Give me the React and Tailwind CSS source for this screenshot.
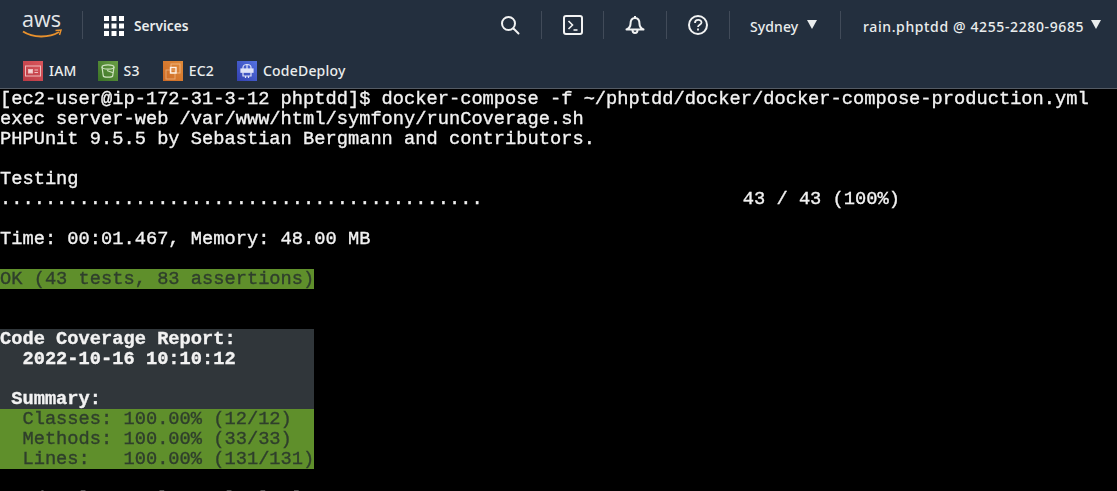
import React from 'react';

const BOOKMARKS = [
  { name: 'IAM', gap: 'mr-[21px]', from: 'from-[#b93a44]', to: 'to-[#d9565c]', icon: 'iam' },
  { name: 'S3', gap: 'mr-[23px]', from: 'from-[#3a7326]', to: 'to-[#6a9f45]', icon: 's3' },
  { name: 'EC2', gap: 'mr-[23px]', from: 'from-[#cc6a26]', to: 'to-[#e08a38]', icon: 'ec2' },
  { name: 'CodeDeploy', gap: '', from: 'from-[#3340b0]', to: 'to-[#5472e0]', icon: 'deploy' },
];

function BookmarkGlyph({ icon }) {
  if (icon === 'iam') {
    return (
      <svg viewBox="0 0 20 20" className="w-5 h-5" fill="none" stroke="#eebcbc" strokeWidth="1">
        <rect x="2.5" y="5" width="15" height="10" />
        <rect x="5.5" y="8.5" width="4" height="3.5" fill="#f3d6d6" />
        <path d="M11.5 9h3.5M11.5 11.5h3.5" />
      </svg>
    );
  }
  if (icon === 's3') {
    return (
      <svg viewBox="0 0 20 20" className="w-5 h-5" fill="none" stroke="#cfe3c0" strokeWidth="1.2">
        <ellipse cx="10" cy="6" rx="6" ry="2.2" />
        <path d="M4 6l1.300 9c.4 1.500 9 1.500 9.400 0L16 6" />
        <path d="M9 9.500l6 2.200" />
      </svg>
    );
  }
  if (icon === 'ec2') {
    return (
      <svg viewBox="0 0 20 20" className="w-5 h-5" fill="none">
        <rect x="8" y="3" width="9" height="9" stroke="#eeb27c" strokeWidth="1" />
        <rect x="3" y="9" width="9" height="9" stroke="#e9a56c" strokeWidth="1" />
        <rect x="7.500" y="6.500" width="5.500" height="5.500" stroke="#fdf1e6" strokeWidth="1.400" />
      </svg>
    );
  }
  return (
    <svg viewBox="0 0 20 20" className="w-5 h-5" fill="none" stroke="#dfe3f8" strokeWidth="1.200">
      <path d="M6 8V6.500C6 4.500 8 3.500 10 3.500s4 1 4 3V8" />
      <rect x="4" y="8" width="12" height="3.200" fill="#dfe3f8" />
      <path d="M6 11.200V15h8v-3.800M8.500 15v2M11.500 15v2M10 3.500V8" />
    </svg>
  );
}

function Caret() {
  return (
    <svg viewBox="0 0 10 9" className="w-[10px] h-[9px]" fill="#eaeded">
      <path d="M0 0h10L5 9z" />
    </svg>
  );
}

function TopBar() {
  return (
    <div className="h-[52px] flex items-center">
      <svg viewBox="0 0 40 28" className="w-10 h-7 ml-[22px] -mt-[1px]">
        <text x="0" y="15" fontFamily="'Open Sans', sans-serif" fontSize="21" fill="#e4e7e9" textLength="39" lengthAdjust="spacingAndGlyphs">aws</text>
        <path d="M1 19.500c10 6.500 26 6.500 36 .5" fill="none" stroke="#e8912d" strokeWidth="2" />
        <path d="M33.500 18.500l5.500-.5-1.500 5" fill="none" stroke="#e8912d" strokeWidth="1.500" />
      </svg>
      <div className="w-px h-[28px] bg-[#414b59] ml-[20px] -mt-[2px]" />
      <svg viewBox="0 0 20 20" className="w-5 h-5 ml-[21px]" fill="#fff">
        <rect x="0" y="0" width="5" height="5" /><rect x="7.500" y="0" width="5" height="5" /><rect x="15" y="0" width="5" height="5" />
        <rect x="0" y="7.500" width="5" height="5" /><rect x="7.500" y="7.500" width="5" height="5" /><rect x="15" y="7.500" width="5" height="5" />
        <rect x="0" y="15" width="5" height="5" /><rect x="7.500" y="15" width="5" height="5" /><rect x="15" y="15" width="5" height="5" />
      </svg>
      <span className="ml-[10px] text-[13.7px] font-semibold text-[#eaeded]">Services</span>

      <div className="flex-1" />

      {/* search */}
      <div className="w-[62px] h-[28px] -mt-[2px] flex items-center justify-center">
        <svg viewBox="0 0 20 20" className="w-5 h-5" fill="none" stroke="#f2f3f3" strokeWidth="2">
          <circle cx="8.500" cy="8.500" r="6.500" />
          <path d="M13.500 13.500l5 5" strokeLinecap="round" />
        </svg>
      </div>
      {/* cloudshell */}
      <div className="w-[62px] h-[28px] -mt-[2px] border-l border-[#414b59] flex items-center justify-center">
        <svg viewBox="0 0 20 20" className="w-5 h-5" fill="none" stroke="#f2f3f3" strokeWidth="2">
          <rect x="1" y="1" width="18" height="18" rx="2" />
          <path d="M5.500 6l4 4-4 4" strokeWidth="1.600" />
          <path d="M10.500 15h4" strokeWidth="1.600" />
        </svg>
      </div>
      {/* notifications */}
      <div className="w-[63px] h-[28px] -mt-[2px] border-l border-[#414b59] flex items-center justify-center">
        <svg viewBox="0 0 20 20" className="w-5 h-5" fill="none" stroke="#f2f3f3" strokeWidth="2">
          <path d="M10 1v2M5.500 9c0-4 2-6 4.500-6s4.500 2 4.500 6c0 2.500 2 4.500 4 5.500H1.500c2-1 4-3 4-5.500z" strokeLinejoin="round" />
          <path d="M7.500 15c0 4 5 4 5 0" />
        </svg>
      </div>
      {/* support */}
      <div className="w-[63px] h-[28px] -mt-[2px] border-l border-[#414b59] flex items-center justify-center">
        <svg viewBox="0 0 20 20" className="w-5 h-5" fill="none" stroke="#f2f3f3" strokeWidth="2">
          <circle cx="10" cy="10" r="9" />
          <path d="M7 8c0-4 6.500-4 6.500-.5 0 2-3.500 2.500-3.500 4.500" strokeWidth="1.800" />
          <path d="M10 13.500v2" strokeWidth="1.800" />
        </svg>
      </div>
      <div className="w-[111px] h-[28px] -mt-[2px] border-l border-[#414b59] flex items-center pl-[20px]">
        <span className="text-[14px] font-medium tracking-[0.1px] text-[#eaeded] mt-[2px]">Sydney</span>
        <span className="ml-[9px] -mt-[2px]"><Caret /></span>
      </div>
      <div className="w-[277px] h-[28px] -mt-[2px] border-l border-[#414b59] flex items-center pl-[22px]">
        <span className="text-[14px] font-medium tracking-[0.62px] text-[#eaeded] whitespace-pre mt-[2px]">rain.phptdd @ 4255-2280-9685</span>
        <span className="ml-[7px] -mt-[2px]"><Caret /></span>
      </div>
    </div>
  );
}

function BookmarkBar() {
  return (
    <div className="h-[37px] pl-[23px] pt-[1px] flex items-center border-b border-[#545b64]">
      {BOOKMARKS.map((b) => (
        <div key={b.name} className={`flex items-center ${b.gap}`}>
          <div className={`w-5 h-5 bg-gradient-to-tr ${b.from} ${b.to}`}>
            <BookmarkGlyph icon={b.icon} />
          </div>
          <span className="ml-[6px] text-[14px] font-medium tracking-[0.2px] text-[#eaeded]">{b.name}</span>
        </div>
      ))}
    </div>
  );
}

function Line({ children, className = '' }) {
  return <div className={`h-5 leading-5 whitespace-pre ${className}`}>{children || ' '}</div>;
}

function Terminal() {
  return (
    <div className="flex-1 overflow-hidden bg-black text-[#f2f2f2] text-[18.72px] [-webkit-text-stroke:0.35px] font-['Liberation_Mono',monospace] blur-[0.3px]">
      <Line>[ec2-user@ip-172-31-3-12 phptdd]$ docker-compose -f ~/phptdd/docker/docker-compose-production.yml</Line>
      <Line>exec server-web /var/www/html/symfony/runCoverage.sh</Line>
      <Line>PHPUnit 9.5.5 by Sebastian Bergmann and contributors.</Line>
      <Line />
      <Line>Testing</Line>
      <Line>{'.'.repeat(43) + ' '.repeat(23)}<span className="ml-[2px]">43 / 43 (100%)</span></Line>
      <Line />
      <Line>Time: 00:01.467, Memory: 48.00 MB</Line>
      <Line />
      <Line className="w-[314px] bg-[#5f8f2b] text-[#2f3f2c]">OK (43 tests, 83 assertions)</Line>
      <Line />
      <Line />
      <div className="w-[314px] bg-[#30363a] font-bold">
        <Line>Code Coverage Report:</Line>
        <Line>  2022-10-16 10:10:12</Line>
        <Line />
        <Line> Summary:</Line>
      </div>
      <div className="w-[314px] bg-[#5f8f2b] text-[#2f3f2c]">
        <Line>  Classes: 100.00% (12/12)</Line>
        <Line>  Methods: 100.00% (33/33)</Line>
        <Line>  Lines:   100.00% (131/131)</Line>
      </div>
      <Line />
      <Line>   d   l   t  l     l  l  l</Line>
    </div>
  );
}

export default function App() {
  return (
    <div className="h-[491px] w-full flex flex-col overflow-hidden bg-black font-['Noto_Sans',sans-serif]">
      <div className="bg-[#232f3e]">
        <TopBar />
        <BookmarkBar />
      </div>
      <Terminal />
    </div>
  );
}
